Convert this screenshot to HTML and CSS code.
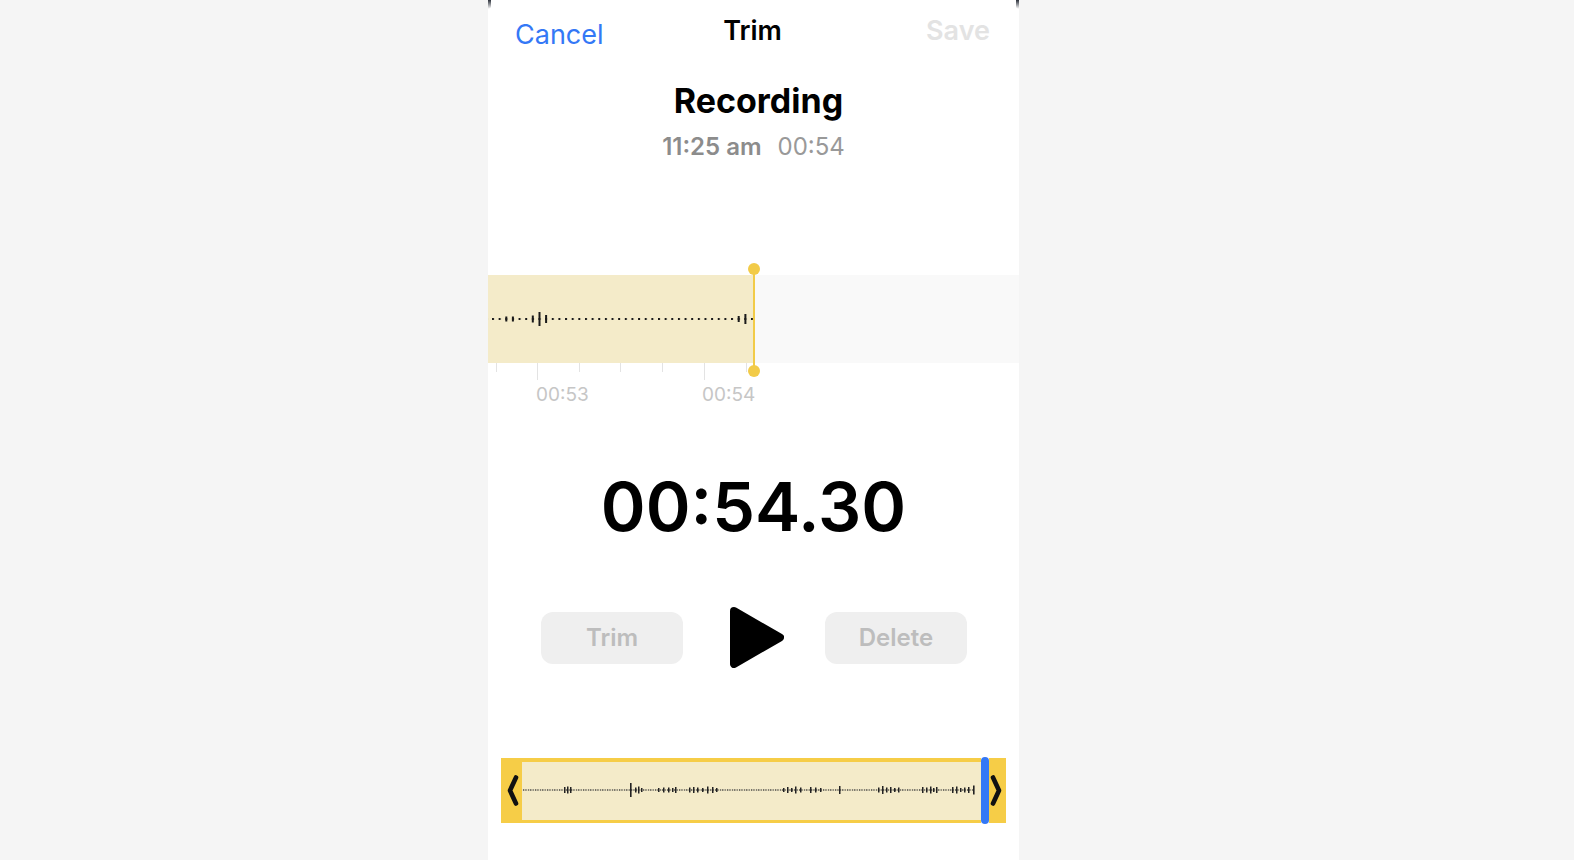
FILE: index.html
```html
<!DOCTYPE html>
<html lang="en">
<head>
  <meta charset="UTF-8" />
  <meta name="viewport" content="width=device-width, initial-scale=1.0"/>
  <title>Trim</title>
  <link rel="stylesheet" href="styles.css">
</head>
<body>
  <div class="phone">
    <div class="nav">
      <span class="nav-cancel">Cancel</span>
      <span class="nav-title">Trim</span>
      <span class="nav-save">Save</span>
    </div>

    <h1 class="rec-name">Recording</h1>
    <p class="rec-meta"><b>11:25 am</b><span>00:54</span></p>

    <!-- zoomed waveform with playhead -->
    <div class="band">
      <div class="band-played">
        <svg width="265" height="88" viewBox="0 0 265 88">
          <defs>
            <pattern id="dotsTop" x="4" y="0" width="6.64" height="88" patternUnits="userSpaceOnUse">
              <rect x="0" y="43" width="2" height="2" fill="#1a1a1a"/>
            </pattern>
          </defs>
          <rect x="0" y="0" width="265" height="88" fill="url(#dotsTop)"/>
          <g fill="#1a1a1a">
            <rect x="17.3" y="41.5" width="2" height="5"/>
            <rect x="23.9" y="41.5" width="2" height="5"/>
            <rect x="43.8" y="40.5" width="2" height="7"/>
            <rect x="50.5" y="37" width="2" height="14"/>
            <rect x="57.1" y="40" width="2" height="8"/>
            <rect x="249.7" y="41" width="2" height="6"/>
            <rect x="256.4" y="39" width="2" height="10"/>
          </g>
        </svg>
      </div>
      <div class="band-rest"></div>
      <div class="playhead"></div>
    </div>

    <svg class="ruler" width="531" height="42" viewBox="0 0 531 42">
      <g stroke="#e3e3e3" stroke-width="1">
        <line x1="8.5" y1="0" x2="8.5" y2="9"/>
        <line x1="49.5" y1="0" x2="49.5" y2="17"/>
        <line x1="91.5" y1="0" x2="91.5" y2="9"/>
        <line x1="132.5" y1="0" x2="132.5" y2="9"/>
        <line x1="174.5" y1="0" x2="174.5" y2="9"/>
        <line x1="216.5" y1="0" x2="216.5" y2="17"/>
        <line x1="258.5" y1="0" x2="258.5" y2="9"/>
      </g>
      <text x="48" y="38" class="ruler-label">00:53</text>
      <text x="214" y="38" class="ruler-label">00:54</text>
    </svg>

    <div class="clock">00:54.30</div>

    <div class="controls">
      <button class="btn">Trim</button>
      <svg class="play" width="54" height="61" viewBox="0 0 54 61">
        <path d="M4 4 L50 30.5 L4 57 Z" fill="#000" stroke="#000" stroke-width="8" stroke-linejoin="round"/>
      </svg>
      <button class="btn btn-delete">Delete</button>
    </div>

    <!-- overview scrubber -->
    <div class="scrubber">
      <div class="handle handle-left">
        <svg width="12" height="31" viewBox="0 0 12 31">
          <polyline points="9,2.5 3,15.5 9,28.5" fill="none" stroke="#111" stroke-width="4.6" stroke-linecap="round" stroke-linejoin="round"/>
        </svg>
      </div>
      <div class="track">
        <svg width="459" height="58" viewBox="0 0 459 58">
          <defs>
            <pattern id="dotsBottom" x="1" y="0" width="2.4" height="58" patternUnits="userSpaceOnUse">
              <rect x="0" y="27.3" width="1.2" height="1.4" fill="#333"/>
            </pattern>
          </defs>
          <rect x="0" y="0" width="452" height="58" fill="url(#dotsBottom)"/>
          <g fill="#222">
            <rect x="42" y="25" width="1.5" height="6"/>
            <rect x="45" y="24.5" width="1.5" height="7"/>
            <rect x="48" y="25" width="1.5" height="6"/>
            <rect x="108" y="21" width="1.6" height="14"/>
            <rect x="113" y="25.5" width="1.5" height="5"/>
            <rect x="116" y="24.5" width="1.5" height="7"/>
            <rect x="119" y="26" width="1.5" height="4"/>
            <rect x="136" y="26" width="1.5" height="4"/>
            <rect x="141" y="25.5" width="1.5" height="5"/>
            <rect x="146" y="25.5" width="1.5" height="5"/>
            <rect x="150" y="26" width="1.5" height="4"/>
            <rect x="153" y="25" width="1.5" height="6"/>
            <rect x="167" y="25.5" width="1.5" height="5"/>
            <rect x="171" y="25" width="1.5" height="6"/>
            <rect x="175" y="25.5" width="1.5" height="5"/>
            <rect x="180" y="26" width="1.5" height="4"/>
            <rect x="185" y="24.5" width="1.5" height="7"/>
            <rect x="190" y="25" width="1.5" height="6"/>
            <rect x="194" y="26" width="1.5" height="4"/>
            <rect x="261" y="26" width="1.5" height="4"/>
            <rect x="265" y="25" width="1.5" height="6"/>
            <rect x="269" y="26" width="1.5" height="4"/>
            <rect x="273" y="24.5" width="1.5" height="7"/>
            <rect x="278" y="25.5" width="1.5" height="5"/>
            <rect x="288" y="25" width="1.5" height="6"/>
            <rect x="293" y="25.5" width="1.5" height="5"/>
            <rect x="298" y="26" width="1.5" height="4"/>
            <rect x="317" y="24" width="1.5" height="8"/>
            <rect x="356" y="25.5" width="1.5" height="5"/>
            <rect x="360" y="24" width="1.5" height="8"/>
            <rect x="364" y="25.5" width="1.5" height="5"/>
            <rect x="368" y="25" width="1.5" height="6"/>
            <rect x="372" y="26" width="1.5" height="4"/>
            <rect x="376" y="25.5" width="1.5" height="5"/>
            <rect x="400" y="25" width="1.5" height="6"/>
            <rect x="404" y="25.5" width="1.5" height="5"/>
            <rect x="408" y="24.5" width="1.5" height="7"/>
            <rect x="411" y="26" width="1.5" height="4"/>
            <rect x="414" y="25" width="1.5" height="6"/>
            <rect x="430" y="25" width="1.5" height="6"/>
            <rect x="434" y="24.5" width="1.5" height="7"/>
            <rect x="438" y="26" width="1.5" height="4"/>
            <rect x="442" y="25.5" width="1.5" height="5"/>
            <rect x="446" y="25" width="1.5" height="6"/>
            <rect x="451" y="23.5" width="1.6" height="9"/>
          </g>
        </svg>
      </div>
      <div class="scrub-head"></div>
      <div class="handle handle-right">
        <svg width="12" height="31" viewBox="0 0 12 31">
          <polyline points="3,2.5 9,15.5 3,28.5" fill="none" stroke="#111" stroke-width="4.6" stroke-linecap="round" stroke-linejoin="round"/>
        </svg>
      </div>
    </div>
  </div>
</body>
</html>
```

FILE: styles.css
```css
body {
  margin: 0;
  background-color: #f5f5f5;
  font-family: Inter, 'Liberation Sans', sans-serif;
  color: #000;
}

.phone {
  position: relative;
  width: 531px;
  height: 860px;
  margin-left: 488px;
  background: white;
  overflow: hidden;
}

/* bits of the dark frame showing at the top corners */
.phone::before,
.phone::after {
  content: "";
  position: absolute;
  top: 0;
  width: 3px;
  height: 9px;
  background: linear-gradient(#2b303a, rgba(43, 48, 58, 0));
}

.phone::before {
  left: 0;
  border-bottom-right-radius: 3px;
}

.phone::after {
  right: 0;
  border-bottom-left-radius: 3px;
}

.nav {
  display: grid;
  grid-template-columns: 1fr auto 1fr;
  align-items: start;
  padding: 15px 29px 0 27px;
  line-height: 32px;
}

.nav-cancel {
  padding-top: 4px;
  font-size: 27px;
  color: #3478f6;
}

.nav-title {
  font-size: 27px;
  font-weight: 600;
}

.nav-save {
  justify-self: end;
  font-size: 27px;
  font-weight: 600;
  color: #e3e3e3;
}

.rec-name {
  margin: 30px 0 0;
  padding-left: 10px;
  font-size: 34px;
  line-height: 40px;
  font-weight: 700;
  text-align: center;
}

.rec-meta {
  margin: 12px 0 0;
  font-size: 24px;
  line-height: 28px;
  text-align: center;
  color: #8c8c8c;
}

.rec-meta b {
  font-weight: 600;
  margin-right: 16px;
}

.rec-meta span {
  color: #999;
}

.band {
  position: relative;
  display: flex;
  height: 88px;
  margin-top: 114px;
}

.band-played {
  width: 265px;
  background: #f4ebc9;
}

.band-played svg {
  display: block;
}

.band-rest {
  flex: 1;
  background: #f9f9f9;
}

.playhead {
  position: absolute;
  left: 265px;
  top: -6px;
  bottom: -8px;
  width: 2px;
  background: #f2cb48;
}

.playhead::before,
.playhead::after {
  content: "";
  position: absolute;
  left: -5px;
  width: 12px;
  height: 12px;
  border-radius: 50%;
  background: #f2cb48;
}

.playhead::before {
  top: -6px;
}

.playhead::after {
  bottom: -6px;
}

.ruler {
  display: block;
}

.ruler-label {
  font-family: Inter, 'Liberation Sans', sans-serif;
  font-size: 19px;
  fill: #c6c6c6;
}

.clock {
  margin-top: 61px;
  font-size: 68px;
  line-height: 80px;
  font-weight: 600;
  text-align: center;
}

.controls {
  display: flex;
  align-items: center;
  height: 61px;
  margin-top: 61px;
  padding-left: 53px;
}

.btn {
  width: 142px;
  height: 52px;
  border: none;
  border-radius: 12px;
  background: #efefef;
  color: #bdbdbd;
  font-family: Inter, 'Liberation Sans', sans-serif;
  font-size: 24px;
  font-weight: 600;
}

.play {
  display: block;
  margin: 0 41px 0 47px;
}

.scrubber {
  display: flex;
  height: 67px;
  margin: 89px 13px 0;
}

.handle {
  display: flex;
  align-items: center;
  margin: 1px 0;
  background: #f6cd47;
}

.handle svg {
  display: block;
}

.handle-left {
  width: 21px;
  justify-content: flex-end;
  padding-right: 3px;
  box-sizing: border-box;
}

.handle-right {
  width: 17px;
  padding-left: 1px;
  box-sizing: border-box;
}

.track {
  flex: 1;
  margin: 1px 0;
  background: #f4ebc9;
  border-top: 4px solid #f6cd47;
  border-bottom: 3px solid #f6cd47;
}

.track svg {
  display: block;
}

.scrub-head {
  width: 8px;
  border-radius: 4px;
  background: #3478f6;
}
```
